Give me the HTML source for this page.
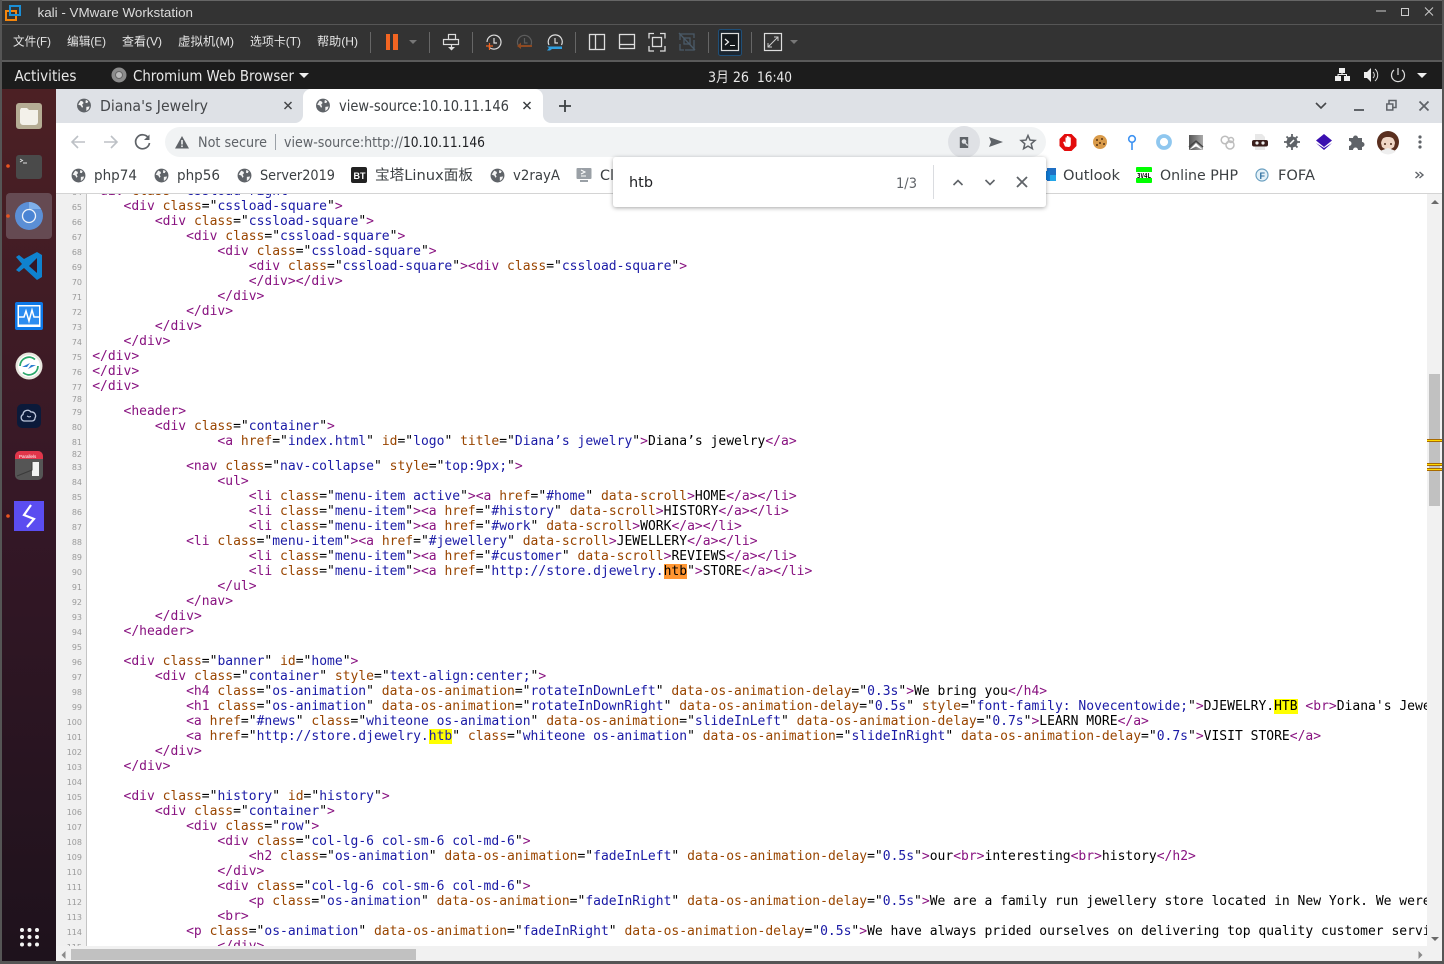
<!DOCTYPE html>
<html lang="en">
<head>
<meta charset="utf-8">
<title>kali - VMware Workstation</title>
<style>
html,body{margin:0;padding:0;width:1444px;height:964px;overflow:hidden;background:#333;}
svg{position:absolute;left:0;top:0;}
#src{position:absolute;left:87px;top:194px;width:1340px;height:752px;overflow:hidden;background:#fff;}
#src pre{position:absolute;left:5.2px;top:-10px;margin:0;font:13px/15px "DejaVu Sans Mono",monospace;color:#000;white-space:pre;}
#src b{font-weight:normal;color:#881280}
#src i{font-style:normal;color:#994500}
#src u{text-decoration:none;color:#1a1aa6}
#src s{text-decoration:none;background:#ffff00;color:#000}
#src em{font-style:normal;background:#ff9632;color:#000}
#src .g{display:block;height:10px}
#gut{position:absolute;left:56px;top:194px;width:30px;height:752px;overflow:hidden;background:#f0f0f0;border-right:1.5px solid #c4c4c4;}
#gut div{position:absolute;right:4px;top:-9px;text-align:right;font:8px/15px "DejaVu Sans",sans-serif;color:#9a9a9a;}
#gut span{display:block;line-height:10px;height:10px}
text{font-family:"Liberation Sans","Noto Sans CJK SC",sans-serif;}
.d{font-family:"DejaVu Sans","Noto Sans CJK SC",sans-serif;}
</style>
</head>
<body>
<svg width="1444" height="964" viewBox="0 0 1444 964" xmlns="http://www.w3.org/2000/svg">
<defs>
<linearGradient id="dock" x1="0" y1="0" x2="0" y2="1"><stop offset="0" stop-color="#4c2024"/><stop offset=".5" stop-color="#341726"/><stop offset="1" stop-color="#1e121c"/></linearGradient>
<linearGradient id="ga" x1="0" y1="0" x2="1" y2="0"><stop offset="0" stop-color="#555"/><stop offset="1" stop-color="#aaa"/></linearGradient>
<symbol id="globe" viewBox="0 0 16 16"><circle cx="8" cy="8" r="7.400" fill="#5f6368"/><path d="M4.500 2.800 7 4l.5 1.500L6 7l1 2-1 1.500L4.500 8 1.800 7zM10 2l2.500 1.500-1 2-2-.5zM10.500 9.500l3.500-.5-1 2.800-2.500 2z" fill="#f4f4f4"/></symbol>
</defs>
<rect width="1444" height="964" fill="#333"/>
<rect x="0" y="0" width="1444" height="1" fill="#666"/>
<rect x="0" y="24" width="1444" height="1" fill="#565656"/>
<rect x="0" y="60" width="1444" height="2" fill="#5a5a5a"/>
<rect x="0" y="0" width="2" height="964" fill="#555"/>
<rect x="1442" y="0" width="2" height="964" fill="#555"/>
<rect x="0" y="961" width="1444" height="3" fill="#555"/>

<!-- VMware logo -->
<rect x="6" y="11" width="10" height="9" fill="none" stroke="#f5860c" stroke-width="2"/>
<rect x="10" y="6" width="10" height="9" fill="none" stroke="#1b8fd6" stroke-width="2"/>
<text x="37.500" y="17" font-size="13" fill="#dcdcdc" textLength="155.500" lengthAdjust="spacingAndGlyphs">kali - VMware Workstation</text>
<path d="M1376 11h10" stroke="#ccc" fill="none"/>
<rect x="1401.500" y="8.500" width="7" height="7" fill="none" stroke="#ccc"/>
<path d="M1425 7.500l8 8M1433 7.500l-8 8" stroke="#ccc" fill="none"/>

<!-- menu -->
<g font-size="12" fill="#e4e4e4">
<text x="13" y="45.500" textLength="38" lengthAdjust="spacingAndGlyphs">文件(F)</text>
<text x="67" y="45.500" textLength="39" lengthAdjust="spacingAndGlyphs">编辑(E)</text>
<text x="122" y="45.500" textLength="40" lengthAdjust="spacingAndGlyphs">查看(V)</text>
<text x="178" y="45.500" textLength="56" lengthAdjust="spacingAndGlyphs">虚拟机(M)</text>
<text x="250" y="45.500" textLength="51" lengthAdjust="spacingAndGlyphs">选项卡(T)</text>
<text x="317" y="45.500" textLength="41" lengthAdjust="spacingAndGlyphs">帮助(H)</text>
</g>
<g fill="#666"><rect x="370" y="32" width="1" height="21"/><rect x="429" y="32" width="1" height="21"/><rect x="472" y="32" width="1" height="21"/><rect x="575" y="32" width="1" height="21"/><rect x="708" y="32" width="1" height="21"/><rect x="751" y="32" width="1" height="21"/></g>
<rect x="386" y="34" width="4" height="16" fill="#f26522"/><rect x="393" y="34" width="5" height="16" fill="#f26522"/>
<path d="M409 40h8l-4 4z" fill="#777"/>
<!-- send-keys/printer -->
<g fill="none" stroke="#ddd" stroke-width="1.200"><rect x="448.500" y="34.500" width="7" height="5"/><rect x="443.500" y="39.500" width="15" height="5"/><path d="M451.500 45v3"/></g>
<path d="M448 47h7l-3.500 3.500z" fill="#ddd"/>
<!-- snapshots -->
<g fill="none" stroke="#ddd" stroke-width="1.200"><path d="M489 47a7 7 0 1 0-2-5"/><path d="M494 38v5h3"/></g>
<path d="M486 46h7M489.500 43v7" stroke="#f26522" stroke-width="1.200"/>
<g fill="none" stroke="#5c5c5c" stroke-width="1.200"><path d="M518 45a7 7 0 1 1 13 0"/><path d="M524.500 38v5h3"/></g>
<path d="M532 45h-11v-2.500l-4 3.500 4 3v-2h11z" fill="#8f4a22"/>
<g fill="none" stroke="#ddd" stroke-width="1.200"><path d="M549 45a7 7 0 1 1 12.500 0"/><path d="M555 38v5h3"/></g>
<path d="M547 46.500h15v2.500h-10l-2 1.500h-3l2-2.500-2-1.500z" fill="#2f9fe0"/>
<!-- view icons -->
<g fill="none" stroke="#ddd" stroke-width="1.300">
<rect x="589.500" y="34.500" width="15" height="15"/><path d="M595.500 34.500v15"/>
<rect x="619.500" y="34.500" width="15" height="14"/><path d="M619.500 44.500h15"/>
<path d="M649 38.500v-5h5M660 33.500h5v5M665 46v5h-5M654 51h-5v-5"/><rect x="652.500" y="37.500" width="9" height="9"/>
</g>
<g fill="none" stroke="#4a5a68" stroke-width="1.300"><path d="M680 40v-6h9M694 40v10h-9M680 44v6h4M689 34h5v4"/><rect x="684" y="38" width="6" height="6"/><path d="M679 33l16 17"/></g>
<rect x="718.500" y="29.500" width="23" height="26" rx="2" fill="#1b2631" stroke="#1f4f78" stroke-width="1"/>
<rect x="721.500" y="33.500" width="17" height="17" fill="#14181c" stroke="#ddd" stroke-width="1.200"/>
<path d="M725 39l3.500 3-3.500 3" fill="none" stroke="#eee" stroke-width="1.200"/><path d="M730 45.500h5" stroke="#eee"/>
<rect x="764.500" y="33.500" width="17" height="17" fill="none" stroke="#ddd" stroke-width="1.200"/>
<path d="M768 47l10-10M768 43v4h4M778 41v-4h-4" fill="none" stroke="#ccc"/>
<path d="M790 40h8l-4 4z" fill="#777"/>

<!-- gnome bar -->
<rect x="2" y="62" width="1440" height="27" fill="#1c1c1c"/>
<text x="14.500" y="81" font-size="15" fill="#e8e8e8" class="d" textLength="62" lengthAdjust="spacingAndGlyphs">Activities</text>
<circle cx="119" cy="75" r="7.500" fill="#8c8c8c"/><circle cx="119" cy="75" r="3.500" fill="#bbb" stroke="#666"/>
<text x="133" y="81" font-size="15" fill="#e8e8e8" class="d" textLength="161" lengthAdjust="spacingAndGlyphs">Chromium Web Browser</text>
<path d="M299 73h10l-5 5z" fill="#eee"/>
<text x="708" y="82" font-size="14" fill="#e8e8e8" class="d" textLength="41" lengthAdjust="spacingAndGlyphs">3月 26</text>
<text x="757" y="82" font-size="14" fill="#e8e8e8" class="d" textLength="35" lengthAdjust="spacingAndGlyphs">16:40</text>
<g fill="#eee"><rect x="1339" y="68" width="6" height="5"/><rect x="1335" y="76" width="6" height="5"/><rect x="1344" y="76" width="6" height="5"/></g>
<path d="M1342 73v2M1338 76v-1.500h8.500V76" stroke="#eee" fill="none"/>
<path d="M1364 72h3l4-4v14l-4-4h-3z" fill="#eee"/><path d="M1373 72a4 4 0 0 1 0 6M1375 69a8 8 0 0 1 0 12" fill="none" stroke="#ddd"/>
<path d="M1394 70a6.500 6.500 0 1 0 8 0M1398 68v7" fill="none" stroke="#ddd" stroke-width="1.200"/>
<path d="M1417 73h10l-5 5z" fill="#eee"/>

<!-- dock -->
<rect x="2" y="89" width="54" height="872" fill="url(#dock)"/>
<rect x="6" y="193" width="46" height="46" rx="4" fill="#654a52"/>
<circle cx="8" cy="166" r="1.800" fill="#e95420"/><circle cx="8" cy="216" r="1.800" fill="#e95420"/><circle cx="8" cy="516" r="1.800" fill="#e95420"/>
<rect x="16" y="103" width="26" height="26" rx="3" fill="#b5ac94"/><path d="M20 110l1-2h6l2 2h9v12a3 3 0 0 1-3 3H23a3 3 0 0 1-3-3z" fill="#f3f1ea"/>
<rect x="16" y="155" width="26" height="24" rx="3" fill="#4a4a4a"/><path d="M20 159l2.500 1.500-2.500 1.500M23 163h4" fill="none" stroke="#ddd"/>
<circle cx="29" cy="216" r="14" fill="#5b8fd6"/><path d="M29 202a14 14 0 0 1 12 7H29z" fill="#7fb0ea"/><circle cx="29" cy="216" r="6.500" fill="#4a84d4" stroke="#f0f4fa" stroke-width="1.300"/>
<path d="M37 252l5 3v22l-5 3-13-12-5 4-3-2 6-6-6-7 3-2 5 4z" fill="#0f82cf"/><path d="M37 258l-8 8 8 7z" fill="#341726"/>
<rect x="15" y="302" width="28" height="28" rx="2" fill="#0d78e8"/><rect x="17.500" y="305" width="23" height="22" fill="#fff"/><rect x="19" y="306.500" width="20" height="18" fill="#2b8cf0"/><path d="M19 317h5l2-6 3 10 3-11 2 7h5" fill="none" stroke="#fff" stroke-width="1.500"/>
<circle cx="29" cy="366" r="13.500" fill="#e8e6de"/><circle cx="29" cy="366" r="11" fill="#fff"/><path d="M20 366a9 9 0 0 1 15-6.500M38 366a9 9 0 0 1-15 6.500" fill="none" stroke="#2aa86a" stroke-width="1.800"/><path d="M22 367l8-4-3 4h-5zM36 365l-8 4 3-4h5z" fill="#2d7fd0"/>
<rect x="17" y="404" width="24" height="24" rx="5" fill="#0b1a3a"/><path d="M24 421a3.500 3.500 0 0 1-1-6.500 4.500 4.500 0 0 1 8-2.500 4 4 0 0 1 4 6 3 3 0 0 1-3 3z" fill="none" stroke="#bcc6dc" stroke-width="1.300"/><path d="M27 416l2 1 2-.5" stroke="#bcc6dc" fill="none"/>
<rect x="15" y="451" width="28" height="29" rx="5" fill="#555"/><path d="M15 456a5 5 0 0 1 5-5h18a5 5 0 0 1 5 5v3H15z" fill="#e2354a"/><rect x="32" y="462" width="7" height="14" fill="#f2f2f2"/><path d="M17 476l15-6v-8" fill="none" stroke="#3a3a3a"/>
<text x="19" y="458" font-size="4.500" fill="#fff">Parallels</text>
<rect x="14" y="501" width="30" height="30" fill="#5b4df0"/><path d="M31 505l-7 10 10 4-7 8" fill="none" stroke="#fff" stroke-width="2.200"/>
<g fill="#f4f4f4"><circle cx="22" cy="930" r="2"/><circle cx="29.500" cy="930" r="2"/><circle cx="37" cy="930" r="2"/><circle cx="22" cy="937" r="2"/><circle cx="29.500" cy="937" r="2"/><circle cx="37" cy="937" r="2"/><circle cx="22" cy="944.500" r="2"/><circle cx="29.500" cy="944.500" r="2"/><circle cx="37" cy="944.500" r="2"/></g>

<!-- chromium tab strip -->
<rect x="56" y="89" width="1386" height="34" fill="#dee1e6"/>
<use href="#globe" x="76.500" y="98" width="15" height="15"/>
<text x="100" y="111" font-size="15" fill="#45474a" class="d" textLength="108" lengthAdjust="spacingAndGlyphs">Diana's Jewelry</text>
<path d="M284.500 102l7 7M291.500 102l-7 7" stroke="#45474a" stroke-width="1.500"/>
<path d="M295 123a8 8 0 0 0 8-8V97a8 8 0 0 1 8-8h224a8 8 0 0 1 8 8v18a8 8 0 0 0 8 8z" fill="#fff"/>
<use href="#globe" x="315.500" y="98" width="15" height="15"/>
<text x="339" y="111" font-size="15" fill="#3c4043" class="d" textLength="170" lengthAdjust="spacingAndGlyphs">view-source:10.10.11.146</text>
<path d="M523.500 102l7 7M530.500 102l-7 7" stroke="#3c4043" stroke-width="1.500"/>
<path d="M565 100v12M559 106h12" stroke="#3c4043" stroke-width="1.800"/>
<path d="M1316 103l5 5 5-5" fill="none" stroke="#45474a" stroke-width="1.600"/>
<rect x="1354" y="109" width="10" height="2" fill="#5f6368"/>
<path d="M1389 104v-3.500h7v7h-3" fill="none" stroke="#5f6368" stroke-width="1.500"/><rect x="1386.800" y="104" width="6" height="6" fill="none" stroke="#5f6368" stroke-width="1.500"/>
<path d="M1419.500 101.500l9 9M1428.500 101.500l-9 9" stroke="#5f6368" stroke-width="1.800"/>

<!-- toolbar -->
<rect x="56" y="123" width="1386" height="71" fill="#fff"/>
<path d="M85 142H72M78 136l-6 6 6 6" fill="none" stroke="#bdc1c6" stroke-width="1.600"/>
<path d="M104 142h13M111 136l6 6-6 6" fill="none" stroke="#bdc1c6" stroke-width="1.600"/>
<path d="M148.500 138a7 7 0 1 0 1 5" fill="none" stroke="#5f6368" stroke-width="1.700"/><path d="M149.500 134.500v5.500h-5.500z" fill="#5f6368"/>
<rect x="165" y="127" width="881" height="30" rx="15" fill="#f1f3f4"/>
<path d="M182 136l7 12.500h-14z" fill="#5f6368"/><rect x="181.200" y="140" width="1.600" height="4.500" fill="#f1f3f4"/><rect x="181.200" y="145.500" width="1.600" height="1.600" fill="#f1f3f4"/>
<text x="198" y="147" font-size="14.500" fill="#5f6368" class="d" textLength="69" lengthAdjust="spacingAndGlyphs">Not secure</text>
<rect x="275" y="134" width="1" height="16" fill="#9aa0a6"/>
<text x="284" y="147" font-size="14.500" fill="#5f6368" class="d" textLength="119" lengthAdjust="spacingAndGlyphs">view-source:http://</text>
<text x="403" y="147" font-size="14.500" fill="#202124" class="d" textLength="82" lengthAdjust="spacingAndGlyphs">10.10.11.146</text>
<circle cx="964" cy="142" r="16" fill="#dfe1e5"/>
<path d="M959.800 137h8.400v11h-8.400z" fill="#5f6368"/><circle cx="964" cy="141.500" r="2.300" fill="#dfe1e5"/><path d="M965.500 143.300l2.200 2.200" stroke="#dfe1e5" stroke-width="1.300"/>
<path d="M989 137l14 5-14 5 2-5z" fill="#5f6368"/>
<path d="M1028 135.500l2 4.600 5 .4-3.800 3.300 1.200 4.900-4.400-2.600-4.400 2.600 1.200-4.900-3.800-3.300 5-.4z" fill="none" stroke="#5f6368" stroke-width="1.500"/>
<!-- extensions -->
<path d="M1064.500 134h7l5 5v7l-5 5h-7l-5-5v-7z" fill="#e30c0c"/><path d="M1065 146.500l-2-4.500 1.500-.5 1 1.500v-5.500h1.300v3.500-5h1.400v5-4.500h1.300v4.500-3.500h1.300v6.500c0 2-1 3-2.500 3z" fill="#fff"/>
<circle cx="1100" cy="142" r="7" fill="#d99b4a"/><g fill="#5a3413"><circle cx="1097" cy="140" r="1"/><circle cx="1102" cy="139" r="1"/><circle cx="1100" cy="143" r="1"/><circle cx="1104" cy="144" r="1"/><circle cx="1097" cy="145" r="1"/></g>
<circle cx="1132" cy="139" r="3.300" fill="none" stroke="#3d92f2" stroke-width="1.600"/><rect x="1131.200" y="142" width="1.600" height="8" fill="#3d92f2"/>
<circle cx="1164" cy="142" r="6" fill="none" stroke="#8fc7ef" stroke-width="3.800"/>
<rect x="1189" y="135" width="14" height="15" fill="url(#ga)"/><path d="M1189 150l7-7 7 7-7-3.500z" fill="#fff"/><path d="M1189 147l7-6 7 6" fill="none" stroke="#444" stroke-width="1.400"/>
<g fill="none" stroke="#bdbdbd" stroke-width="1.500"><circle cx="1225" cy="140" r="3.800"/><circle cx="1231" cy="140" r="2.500"/><circle cx="1230" cy="145" r="4"/></g>
<path d="M1255 134h7l3 3v13h-10z" fill="#e8e8e8"/><rect x="1252" y="140" width="16" height="6.500" rx="2" fill="#3a1f1c"/><circle cx="1257" cy="143" r="1.600" fill="#eee"/><circle cx="1263" cy="143" r="1.600" fill="#eee"/>
<circle cx="1292" cy="142" r="5.500" fill="#5f6368"/><path d="M1292 134v16M1284 142h16M1286.500 136.500l11 11M1297.500 136.500l-11 11" stroke="#5f6368" stroke-width="1.800"/><path d="M1290 144l4-4" stroke="#fff" stroke-width="1.500"/>
<path d="M1324 134l8 6.500-8 6.500-8-6.500z" fill="#3a0fb0"/><path d="M1316 143l8 7 8-7-8 5z" fill="#3a0fb0"/>
<path d="M1349 138h4a2.500 2.500 0 0 1 5 0h4v4a2.500 2.500 0 0 1 0 5v3h-4a2.500 2.500 0 0 0-5 0h-4v-4a2.500 2.500 0 0 0 0-5z" fill="#5f6368"/>
<circle cx="1388" cy="142" r="11" fill="#5a2f1f"/><path d="M1381 143c1-5 3-6 7-6s6 1 7 6l-1 4-6 4-6-4z" fill="#efd6c6"/><path d="M1380 151a11 11 0 0 0 16 0l-8-3z" fill="#eee"/><circle cx="1385" cy="144" r="1" fill="#4a2a1a"/><circle cx="1391" cy="144" r="1" fill="#4a2a1a"/>
<g fill="#5f6368"><circle cx="1420" cy="137" r="1.600"/><circle cx="1420" cy="142" r="1.600"/><circle cx="1420" cy="147" r="1.600"/></g>

<!-- bookmarks -->
<rect x="56" y="193" width="1386" height="1" fill="#d4d4d4"/>
<g font-size="14.500" fill="#3c4043" class="d">
<use href="#globe" x="71" y="168" width="15" height="15"/>
<text x="94" y="180" class="d" textLength="43" lengthAdjust="spacingAndGlyphs">php74</text>
<use href="#globe" x="154" y="168" width="15" height="15"/>
<text x="177" y="180" class="d" textLength="43" lengthAdjust="spacingAndGlyphs">php56</text>
<use href="#globe" x="237" y="168" width="15" height="15"/>
<text x="260" y="180" class="d" textLength="75" lengthAdjust="spacingAndGlyphs">Server2019</text>
<rect x="351" y="167" width="16" height="16" rx="2" fill="#222"/>
<text x="353.500" y="179" font-size="9" fill="#fff" style="font-size:9px;font-weight:bold">BT</text>
<text x="375" y="180" class="d" textLength="98" lengthAdjust="spacingAndGlyphs">宝塔Linux面板</text>
<use href="#globe" x="490" y="168" width="15" height="15"/>
<text x="513" y="180" class="d" textLength="47" lengthAdjust="spacingAndGlyphs">v2rayA</text>
<rect x="576.500" y="168" width="15" height="11" rx="1" fill="#9aa0a6"/><path d="M581 170l4 2-4 2M581 176h5" fill="none" stroke="#fff"/><rect x="580" y="180" width="8" height="2" fill="#9aa0a6"/>
<text x="600" y="180" class="d" textLength="14" lengthAdjust="spacingAndGlyphs">Cl</text>
<path d="M1047 168h9v13h-9z" fill="#1f6fc4"/><path d="M1042 171h8v9h-8z" fill="#0f7bd6"/><path d="M1050 175h6v6h-6z" fill="#23a6e8"/>
<text x="1063" y="180" class="d" textLength="57" lengthAdjust="spacingAndGlyphs">Outlook</text>
<rect x="1136" y="167" width="16" height="16" rx="1" fill="#0f0"/><rect x="1136" y="172" width="16" height="6" fill="#fff"/>
<text x="1137" y="178" style="font-size:7px;font-weight:bold;font-family:'DejaVu Sans Mono',monospace" fill="#000" textLength="14" lengthAdjust="spacingAndGlyphs">3V4L</text>
<text x="1160" y="180" class="d" textLength="78" lengthAdjust="spacingAndGlyphs">Online PHP</text>
<circle cx="1262" cy="175" r="6" fill="#e4f1f8" stroke="#6a9fc0" stroke-width="1.200"/><text x="1259.500" y="179" style="font-size:9px;font-weight:bold" fill="#2f6f9f">F</text>
<text x="1278" y="180" class="d" textLength="37" lengthAdjust="spacingAndGlyphs">FOFA</text>
<path d="M1415.500 172l3.500 3-3.500 3M1419.500 172l3.500 3-3.500 3" fill="none" stroke="#5f6368" stroke-width="1.400"/>
</g>

<!-- scrollbars -->
<rect x="56" y="946" width="1386" height="15" fill="#f1f1f1"/>
<rect x="1427" y="194" width="15" height="767" fill="#f1f1f1"/>
<rect x="71" y="949" width="345" height="11" fill="#c1c1c1"/>
<rect x="1429" y="374" width="11" height="132" fill="#c1c1c1"/>
<path d="M65.500 951v8l-4-4zM1418.500 951v8l4-4z" fill="#8a8a8a"/>
<path d="M1431 204h8l-4-4zM1431 937h8l-4 4z" fill="#6a6a6a"/>
<g>
<rect x="1427" y="439" width="15" height="3" fill="#a86a00"/><rect x="1427" y="440" width="15" height="1" fill="#ffd800"/>
<rect x="1427" y="463" width="15" height="3" fill="#a86a00"/><rect x="1427" y="464" width="15" height="1" fill="#ffd800"/>
<rect x="1427" y="468" width="15" height="3" fill="#a86a00"/><rect x="1427" y="469" width="15" height="1" fill="#ffd800"/>
</g>
</svg>

<div id="gut"><div>64<br>65<br>66<br>67<br>68<br>69<br>70<br>71<br>72<br>73<br>74<br>75<br>76<br>77<br><span>78</span>79<br>80<br>81<br><span>82</span>83<br>84<br>85<br>86<br>87<br>88<br>89<br>90<br>91<br>92<br>93<br>94<br>95<br>96<br>97<br>98<br>99<br>100<br>101<br>102<br>103<br>104<br>105<br>106<br>107<br>108<br>109<br>110<br>111<br>112<br>113<br>114<br>115</div></div>

<div id="src"><pre><b>&lt;div</b> <i>class</i>="<u>cssload-right</u>"
    <b>&lt;div</b> <i>class</i>="<u>cssload-square</u>"<b>&gt;</b>
        <b>&lt;div</b> <i>class</i>="<u>cssload-square</u>"<b>&gt;</b>
            <b>&lt;div</b> <i>class</i>="<u>cssload-square</u>"<b>&gt;</b>
                <b>&lt;div</b> <i>class</i>="<u>cssload-square</u>"<b>&gt;</b>
                    <b>&lt;div</b> <i>class</i>="<u>cssload-square</u>"<b>&gt;&lt;div</b> <i>class</i>="<u>cssload-square</u>"<b>&gt;</b>
                    <b>&lt;/div&gt;&lt;/div&gt;</b>
                <b>&lt;/div&gt;</b>
            <b>&lt;/div&gt;</b>
        <b>&lt;/div&gt;</b>
    <b>&lt;/div&gt;</b>
<b>&lt;/div&gt;</b>
<b>&lt;/div&gt;</b>
<b>&lt;/div&gt;</b>
<span class="g"></span>    <b>&lt;header&gt;</b>
        <b>&lt;div</b> <i>class</i>="<u>container</u>"<b>&gt;</b>
                <b>&lt;a</b> <i>href</i>="<u>index.html</u>" <i>id</i>="<u>logo</u>" <i>title</i>="<u>Diana’s jewelry</u>"<b>&gt;</b>Diana’s jewelry<b>&lt;/a&gt;</b>
<span class="g"></span>            <b>&lt;nav</b> <i>class</i>="<u>nav-collapse</u>" <i>style</i>="<u>top:9px;</u>"<b>&gt;</b>
                <b>&lt;ul&gt;</b>
                    <b>&lt;li</b> <i>class</i>="<u>menu-item active</u>"<b>&gt;&lt;a</b> <i>href</i>="<u>#home</u>" <i>data-scroll</i><b>&gt;</b>HOME<b>&lt;/a&gt;&lt;/li&gt;</b>
                    <b>&lt;li</b> <i>class</i>="<u>menu-item</u>"<b>&gt;&lt;a</b> <i>href</i>="<u>#history</u>" <i>data-scroll</i><b>&gt;</b>HISTORY<b>&lt;/a&gt;&lt;/li&gt;</b>
                    <b>&lt;li</b> <i>class</i>="<u>menu-item</u>"<b>&gt;&lt;a</b> <i>href</i>="<u>#work</u>" <i>data-scroll</i><b>&gt;</b>WORK<b>&lt;/a&gt;&lt;/li&gt;</b>
            <b>&lt;li</b> <i>class</i>="<u>menu-item</u>"<b>&gt;&lt;a</b> <i>href</i>="<u>#jewellery</u>" <i>data-scroll</i><b>&gt;</b>JEWELLERY<b>&lt;/a&gt;&lt;/li&gt;</b>
                    <b>&lt;li</b> <i>class</i>="<u>menu-item</u>"<b>&gt;&lt;a</b> <i>href</i>="<u>#customer</u>" <i>data-scroll</i><b>&gt;</b>REVIEWS<b>&lt;/a&gt;&lt;/li&gt;</b>
                    <b>&lt;li</b> <i>class</i>="<u>menu-item</u>"<b>&gt;&lt;a</b> <i>href</i>="<u>http://store.djewelry.</u><em>htb</em>"<b>&gt;</b>STORE<b>&lt;/a&gt;&lt;/li&gt;</b>
                <b>&lt;/ul&gt;</b>
            <b>&lt;/nav&gt;</b>
        <b>&lt;/div&gt;</b>
    <b>&lt;/header&gt;</b>

    <b>&lt;div</b> <i>class</i>="<u>banner</u>" <i>id</i>="<u>home</u>"<b>&gt;</b>
        <b>&lt;div</b> <i>class</i>="<u>container</u>" <i>style</i>="<u>text-align:center;</u>"<b>&gt;</b>
            <b>&lt;h4</b> <i>class</i>="<u>os-animation</u>" <i>data-os-animation</i>="<u>rotateInDownLeft</u>" <i>data-os-animation-delay</i>="<u>0.3s</u>"<b>&gt;</b>We bring you<b>&lt;/h4&gt;</b>
            <b>&lt;h1</b> <i>class</i>="<u>os-animation</u>" <i>data-os-animation</i>="<u>rotateInDownRight</u>" <i>data-os-animation-delay</i>="<u>0.5s</u>" <i>style</i>="<u>font-family: Novecentowide;</u>"<b>&gt;</b>DJEWELRY.<s>HTB</s> <b>&lt;br&gt;</b>Diana's Jewelry<b>&lt;/h1&gt;</b>
            <b>&lt;a</b> <i>href</i>="<u>#news</u>" <i>class</i>="<u>whiteone os-animation</u>" <i>data-os-animation</i>="<u>slideInLeft</u>" <i>data-os-animation-delay</i>="<u>0.7s</u>"<b>&gt;</b>LEARN MORE<b>&lt;/a&gt;</b>
            <b>&lt;a</b> <i>href</i>="<u>http://store.djewelry.</u><s style="color:#1a1aa6">htb</s>" <i>class</i>="<u>whiteone os-animation</u>" <i>data-os-animation</i>="<u>slideInRight</u>" <i>data-os-animation-delay</i>="<u>0.7s</u>"<b>&gt;</b>VISIT STORE<b>&lt;/a&gt;</b>
        <b>&lt;/div&gt;</b>
    <b>&lt;/div&gt;</b>

    <b>&lt;div</b> <i>class</i>="<u>history</u>" <i>id</i>="<u>history</u>"<b>&gt;</b>
        <b>&lt;div</b> <i>class</i>="<u>container</u>"<b>&gt;</b>
            <b>&lt;div</b> <i>class</i>="<u>row</u>"<b>&gt;</b>
                <b>&lt;div</b> <i>class</i>="<u>col-lg-6 col-sm-6 col-md-6</u>"<b>&gt;</b>
                    <b>&lt;h2</b> <i>class</i>="<u>os-animation</u>" <i>data-os-animation</i>="<u>fadeInLeft</u>" <i>data-os-animation-delay</i>="<u>0.5s</u>"<b>&gt;</b>our<b>&lt;br&gt;</b>interesting<b>&lt;br&gt;</b>history<b>&lt;/h2&gt;</b>
                <b>&lt;/div&gt;</b>
                <b>&lt;div</b> <i>class</i>="<u>col-lg-6 col-sm-6 col-md-6</u>"<b>&gt;</b>
                    <b>&lt;p</b> <i>class</i>="<u>os-animation</u>" <i>data-os-animation</i>="<u>fadeInRight</u>" <i>data-os-animation-delay</i>="<u>0.5s</u>"<b>&gt;</b>We are a family run jewellery store located in New York. We were founded
                <b>&lt;br&gt;</b>
            <b>&lt;p</b> <i>class</i>="<u>os-animation</u>" <i>data-os-animation</i>="<u>fadeInRight</u>" <i>data-os-animation-delay</i>="<u>0.5s</u>"<b>&gt;</b>We have always prided ourselves on delivering top quality customer service
                <b>&lt;/div&gt;</b></pre></div>

<svg width="1444" height="964" viewBox="0 0 1444 964" xmlns="http://www.w3.org/2000/svg" style="pointer-events:none">
<defs><filter id="sh" x="-5%" y="-20%" width="110%" height="150%"><feDropShadow dx="0" dy="1" stdDeviation="2" flood-color="#000" flood-opacity=".35"/></filter></defs>
<rect x="613" y="157" width="433" height="50" rx="3" fill="#fff" filter="url(#sh)"/>
<text x="629" y="187" font-size="14.500" fill="#202124" class="d" textLength="24" lengthAdjust="spacingAndGlyphs">htb</text>
<text x="896" y="188" font-size="14" fill="#5f6368" class="d" textLength="21" lengthAdjust="spacingAndGlyphs">1/3</text>
<rect x="933" y="165" width="1" height="34" fill="#dadce0"/>
<path d="M953.500 185l4.500-4.500 4.500 4.500M985.500 180l4.500 4.500 4.500-4.500" fill="none" stroke="#5f6368" stroke-width="1.600"/>
<path d="M1017 177l10 10M1027 177l-10 10" stroke="#5f6368" stroke-width="1.800"/>
</svg>
</body>
</html>
